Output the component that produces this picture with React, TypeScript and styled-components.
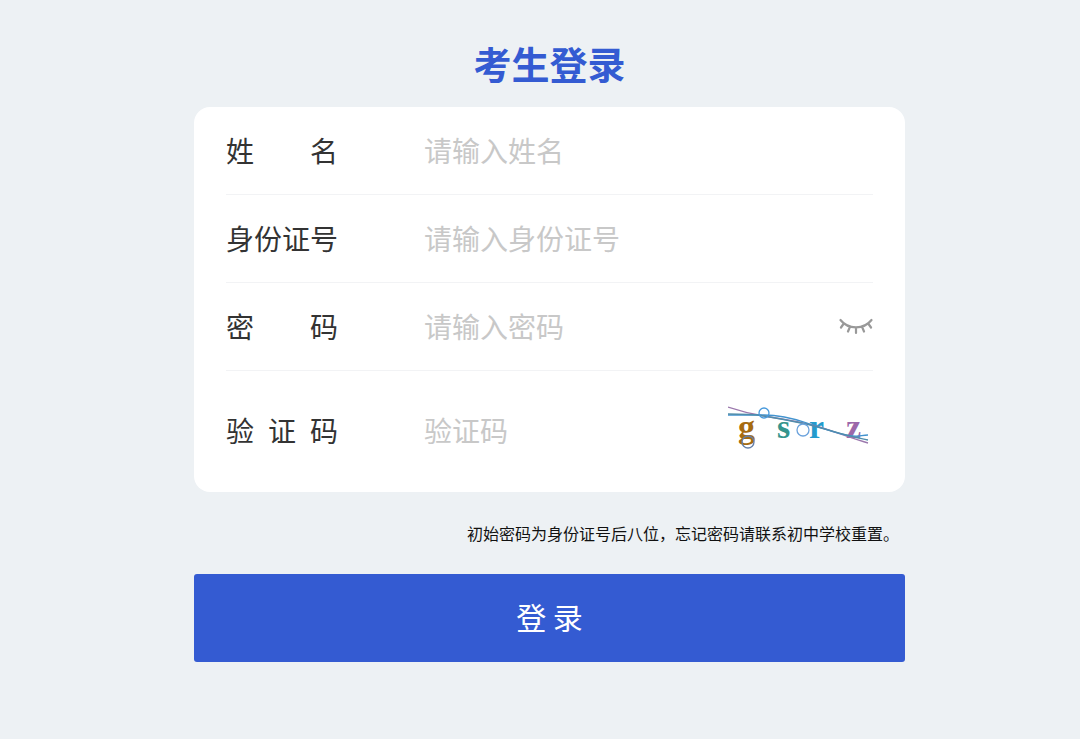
import React, { useState } from 'react';
import styled, { createGlobalStyle } from 'styled-components';

const GlobalStyle = createGlobalStyle`
  *, *::before, *::after { box-sizing: border-box; }
  body {
    margin: 0;
    background: #edf1f4;
    color: #333;
    font-family: "Noto Sans CJK SC", sans-serif;
  }
  button, input { font-family: inherit; }
`;

const Page = styled.main`
  min-height: 100vh;
  padding: 35px 175px 40px 194px;
`;

const Title = styled.h1`
  margin: 0 0 16px;
  color: #345bd2;
  font-size: 38px;
  font-weight: 700;
  line-height: 56px;
  text-align: center;
`;

const Card = styled.div`
  padding: 0 32px;
  border-radius: 16px;
  background: #fff;
`;

const Row = styled.div<{ $tall?: boolean }>`
  display: flex;
  align-items: center;
  min-height: ${(p) => (p.$tall ? 121 : 88)}px;
  padding-bottom: ${(p) => (p.$tall ? 4 : 2)}px;
  border-bottom: ${(p) => (p.$tall ? 'none' : '1px solid #f2f3f5')};
`;

const Label = styled.label`
  flex: none;
  width: 112px;
  margin-right: 86px;
  font-size: 28px;
  line-height: 40px;
  text-align: justify;
  text-align-last: justify;
`;

const Field = styled.input`
  flex: 1;
  min-width: 0;
  height: 48px;
  padding: 0;
  border: 0;
  outline: 0;
  background: transparent;
  color: #333;
  font-size: 28px;
  &::placeholder { color: #c8c8c8; opacity: 1; }
`;

const IconButton = styled.button`
  display: flex;
  flex: none;
  padding: 0;
  border: 0;
  background: none;
  cursor: pointer;
`;

const CaptchaButton = styled(IconButton)`
  margin-right: 3px;
`;

const Hint = styled.p`
  margin: 0;
  padding: 29px 6px 29px;
  color: #111;
  font-size: 16px;
  line-height: 24px;
  text-align: right;
`;

const Submit = styled.button`
  display: block;
  width: 100%;
  height: 88px;
  padding: 0 0 5px;
  border: 0;
  border-radius: 3px;
  background: #345bd2;
  color: #fff;
  font-size: 30px;
  line-height: 44px;
  cursor: pointer;
`;

const ClosedEye = () => (
  <svg width="34" height="20" viewBox="0 0 34 20" fill="none" stroke="#999" strokeWidth="2.200" strokeLinecap="round" aria-hidden="true">
    <path d="M1.500 4C9 13.700 25 13.700 32.500 4M4.800 7.500L2 11.500M11 10.800L9 15.500M17 11.500V17M23 10.800L25 15.500M29.200 7.500L32 11.500" />
  </svg>
);

const Captcha = () => (
  <svg width="142" height="52" viewBox="0 0 142 52" fill="none" aria-hidden="true">
    <g fontFamily="Liberation Serif, serif" fontWeight="700" fontSize="34">
      <text x="10" y="34" fill="#a66b10">g</text>
      <text x="49" y="34" fill="#35958d">s</text>
      <text x="81" y="34" fill="#249bcd">r</text>
      <text x="118" y="34" fill="#9c68aa">z</text>
    </g>
    <g strokeWidth="1.300">
      <path d="M0 3C12 7 24 10 36 12S68 17 84 21S122 34 140 39" stroke="#9b78ad" />
      <path d="M0 11H36C52 11 64 14 79 19S104 28 118 31S132 31 140 31" stroke="#4393cf" />
      <path d="M0 10C12 10 24 10 36 12S64 17 78 20S122 33 140 36" stroke="#508dab" />
      <circle cx="36" cy="9" r="5" stroke="#4799dc" />
      <circle cx="75" cy="26" r="6" stroke="#6ba2dc" />
      <circle cx="20" cy="38" r="6" stroke="#647fa8" />
    </g>
  </svg>
);

export default function App() {
  const [visible, setVisible] = useState(false);
  return (
    <>
      <GlobalStyle />
      <Page>
        <Title>考生登录</Title>
        <form onSubmit={(e) => e.preventDefault()}>
          <Card>
            <Row>
              <Label htmlFor="name">姓 名</Label>
              <Field id="name" type="text" placeholder="请输入姓名" />
            </Row>
            <Row>
              <Label htmlFor="idcard">身份证号</Label>
              <Field id="idcard" type="text" placeholder="请输入身份证号" />
            </Row>
            <Row>
              <Label htmlFor="password">密 码</Label>
              <Field id="password" type={visible ? 'text' : 'password'} placeholder="请输入密码" />
              <IconButton type="button" aria-label="显示密码" onClick={() => setVisible(!visible)}>
                <ClosedEye />
              </IconButton>
            </Row>
            <Row $tall>
              <Label htmlFor="captcha">验 证 码</Label>
              <Field id="captcha" type="text" placeholder="验证码" />
              <CaptchaButton type="button" aria-label="刷新验证码">
                <Captcha />
              </CaptchaButton>
            </Row>
          </Card>
          <Hint>初始密码为身份证号后八位，忘记密码请联系初中学校重置。</Hint>
          <Submit type="submit">登 录</Submit>
        </form>
      </Page>
    </>
  );
}
